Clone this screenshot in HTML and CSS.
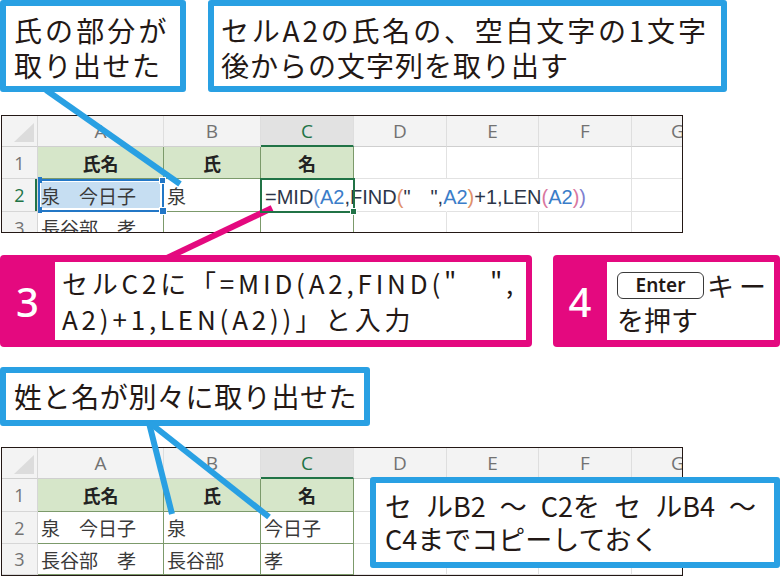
FILE: index.html
```html
<!DOCTYPE html>
<html lang="ja">
<head>
<meta charset="utf-8">
<title>MID関数で名を取り出す</title>
<link rel="stylesheet" href="styles.css">
</head>
<body>
<div class="page">
  <div class="top-row">
    <div class="callout c1"><span class="ln l1">氏の部分が</span><span class="ln l2">取り出せた</span></div>
    <div class="callout c2"><span class="ln l1">セルA2の氏名の、空白文字の1文字</span><span class="ln l2">後からの文字列を取り出す</span></div>
  </div>

  <div class="sheet sheet1">
    <div class="corner"><i></i></div>
    <div class="hd">A</div><div class="hd">B</div><div class="hd on">C</div><div class="hd">D</div><div class="hd">E</div><div class="hd">F</div><div class="hd">G</div>

    <div class="rh">1</div>
    <div class="cell t g">氏名</div><div class="cell t g">氏</div><div class="cell t g">名</div>
    <div class="cell"></div><div class="cell"></div><div class="cell"></div><div class="cell"></div>

    <div class="rh on">2</div>
    <div class="cell t pick">泉　今日子<span class="knob k-tl"></span><span class="knob k-tr"></span><span class="knob k-bl"></span><span class="knob k-br"></span></div>
    <div class="cell t">泉</div>
    <div class="cell t edit"><span class="f">=MID<span class="p1">(</span><span class="r">A2</span>,FIND<span class="p2">(</span>"　",<span class="r">A2</span><span class="p2">)</span>+1,LEN<span class="p3">(</span><span class="r">A2</span><span class="p3">)</span><span class="p4">)</span></span><span class="knob k-g"></span></div>
    <div class="cell bare"></div><div class="cell bare"></div><div class="cell"></div><div class="cell"></div>

    <div class="rh">3</div>
    <div class="cell t">長谷部　孝</div><div class="cell t"></div><div class="cell t"></div>
    <div class="cell"></div><div class="cell"></div><div class="cell"></div><div class="cell"></div>
  </div>

  <div class="steps">
    <div class="step s3">
      <div class="num">3</div>
      <div class="body"><span class="ln">セルC2に「=MID(A2,FIND("　",</span><span class="ln">A2)+1,LEN(A2))」と入力</span></div>
    </div>
    <div class="step s4">
      <div class="num">4</div>
      <div class="body"><span class="ln"><span class="key">Enter</span><span class="kk">キー</span></span><span class="ln">を押す</span></div>
    </div>
  </div>

  <div class="callout c3">姓と名が別々に取り出せた</div>

  <div class="sheet sheet2">
    <div class="corner"><i></i></div>
    <div class="hd">A</div><div class="hd">B</div><div class="hd on">C</div><div class="hd">D</div><div class="hd">E</div><div class="hd">F</div><div class="hd">G</div>

    <div class="rh">1</div>
    <div class="cell t g">氏名</div><div class="cell t g">氏</div><div class="cell t g">名</div>
    <div class="cell"></div><div class="cell"></div><div class="cell"></div><div class="cell"></div>

    <div class="rh">2</div>
    <div class="cell t">泉　今日子</div><div class="cell t">泉</div><div class="cell t">今日子</div>
    <div class="cell"></div><div class="cell"></div><div class="cell"></div><div class="cell"></div>

    <div class="rh">3</div>
    <div class="cell t">長谷部　孝</div><div class="cell t">長谷部</div><div class="cell t">孝</div>
    <div class="cell"></div><div class="cell"></div><div class="cell"></div><div class="cell"></div>
  </div>

  <svg class="leaders" width="783" height="576" viewBox="0 0 783 576" aria-hidden="true">
    <g stroke="#29a0e3" stroke-width="6" fill="none">
      <line x1="46" y1="90" x2="180" y2="184"/>
      <line x1="149" y1="423" x2="172" y2="514"/>
      <line x1="150" y1="423" x2="269" y2="517"/>
    </g>
    <line x1="167" y1="258" x2="272" y2="208" stroke="#e4097f" stroke-width="6"/>
  </svg>

  <div class="callout c4"><span class="ln l1">セ ルB2 ～ C2を セ ルB4 ～</span><span class="ln">C4までコピーしておく</span></div>
</div>
</body>
</html>
```

FILE: styles.css
```css
* { box-sizing: border-box; }
html, body { margin: 0; padding: 0; background: #fff; }
body {
  font-family: "Noto Sans CJK JP", "Noto Sans", sans-serif;
  color: #231815;
}
.page {
  position: relative;
  width: 783px;
  height: 576px;
  overflow: hidden;
}

/* callouts */
.top-row { display: flex; gap: 22px; height: 92px; }
.callout {
  background: #fff;
  border: 6px solid #29a0e3;
  border-radius: 3px;
  font-size: 28px;
  line-height: 35px;
}
.ln { display: block; white-space: nowrap; }
.c1 { width: 186px; padding: 7px 0 0 8px; }
.c1 .l1 { letter-spacing: 3.1px; }
.c1 .l2 { letter-spacing: 1.5px; }
.c2 { width: 519px; padding: 7px 0 0 7px; }
.c2 .l1 { letter-spacing: 2.8px; }
.c2 .l2 { letter-spacing: 1px; }
.c3 {
  width: 370px;
  height: 59px;
  margin-top: 20px;
  padding-left: 8px;
  display: flex;
  align-items: center;
  letter-spacing: 0.6px;
}
.c4 {
  position: absolute;
  left: 370px;
  top: 477px;
  width: 410px;
  height: 91px;
  padding: 6px 0 0 9px;
  font-size: 27px;
  line-height: 33px;
}
.c4 .l1 { word-spacing: 8px; }

/* spreadsheet */
.sheet {
  margin-left: 1px;
  width: 682px;
  border: 1px solid #231815;
  display: grid;
  grid-template-columns: 36px 126px 97px 93px 93px 92px 93px 93px;
  overflow: hidden;
  background: #fff;
}
.sheet1 { margin-top: 23px; height: 118px; grid-template-rows: 31px 32px 33px 32px; }
.sheet2 { margin-top: 21px; height: 129px; grid-template-rows: 31px 33px 32px 31px; }

.corner {
  background: #f3f3f3;
  border-right: 1px solid #d8d8d8;
  border-bottom: 1px solid #cfcfcf;
  display: flex;
  align-items: flex-end;
  justify-content: flex-end;
  padding: 0 3px 4px 0;
}
.corner i {
  display: block;
  width: 20px;
  height: 19px;
  background: #dcdcdc;
  clip-path: polygon(100% 0, 100% 100%, 0 100%);
}
.hd, .rh {
  background: #f3f3f3;
  display: flex;
  align-items: center;
  justify-content: center;
  font-family: "Open Sans", "Liberation Sans", sans-serif;
  color: #727272;
}
.hd {
  border-right: 1px solid #dedede;
  border-bottom: 1px solid #cfcfcf;
  font-size: 19px;
}
.hd.on {
  background: #e2e2e2;
  color: #217346;
  border-bottom: 2px solid #217346;
}
.rh {
  border-right: 1px solid #d6d6d6;
  border-bottom: 1px solid #d6d6d6;
  font-size: 18px;
}
.rh.on { color: #217346; box-shadow: inset -2px 0 0 #217346; }

.cell {
  border-right: 1px solid #e2e2e2;
  border-bottom: 1px solid #e2e2e2;
  display: flex;
  align-items: center;
  padding-left: 3px;
  white-space: nowrap;
  font-size: 19px;
  color: #3a3a3a;
}
.cell.t { border-color: #7c9a6b; }
.cell.g {
  background: #d6e6c9;
  justify-content: center;
  padding-left: 0;
  font-weight: 700;
  font-size: 18px;
  color: #222;
}
.cell.bare { border-right-color: transparent; }

.pick {
  position: relative;
  z-index: 1;
  background: #c6def2;
  outline: 2px solid #2377c6;
  outline-offset: -2px;
  box-shadow: inset 0 0 0 3px #fff;
}
.edit {
  position: relative;
  z-index: 2;
  padding-left: 4px;
  outline: 2px solid #217346;
  outline-offset: -1px;
}
.knob {
  position: absolute;
  background: #2377c6;
  border: 1px solid #fff;
}
.k-tl { left: 0; top: -2px; width: 4px; height: 6px; border: 0; }
.k-bl { left: 0; bottom: -2px; width: 4px; height: 6px; border: 0; }
.k-tr { right: -3px; top: -2px; width: 7px; height: 7px; }
.k-br { right: -4px; bottom: -4px; width: 8px; height: 8px; }
.k-g { right: -4px; bottom: -4px; width: 7px; height: 7px; background: #217346; }

.f {
  font-family: "Liberation Sans", "Noto Sans CJK JP", sans-serif;
  font-size: 20px;
  color: #2c3548;
}
.f .r { color: #3a7dc9; }
.f .p1 { color: #5b8fd0; }
.f .p2 { color: #e0906a; }
.f .p3 { color: #d9779f; }
.f .p4 { color: #7f7fd0; }

/* steps */
.steps { display: flex; gap: 21px; margin-top: 22px; height: 92px; }
.step {
  display: flex;
  background: #e4097f;
  border-radius: 4px;
  padding: 7px 6px 7px 0;
}
.s3 { width: 532px; }
.s4 { width: 227px; }
.num {
  width: 55px;
  flex: none;
  display: flex;
  align-items: center;
  justify-content: center;
  color: #fff;
  font-family: "Noto Sans", sans-serif;
  font-weight: 500;
  font-size: 40px;
}
.s4 .num { width: 54px; }
.body {
  flex: 1;
  background: #fff;
  display: flex;
  flex-direction: column;
  justify-content: center;
}
.s3 .body { padding-left: 7px; font-size: 26px; line-height: 36px; letter-spacing: 3.8px; }
.s4 .body { padding-left: 10px; font-size: 27px; line-height: 34px; }
.key {
  display: inline-flex;
  align-items: center;
  justify-content: center;
  width: 87px;
  height: 27px;
  border: 1.5px solid #3a3a3a;
  border-radius: 6px;
  font-family: "Noto Sans", sans-serif;
  font-weight: 600;
  font-size: 19px;
  line-height: 1;
  vertical-align: middle;
}
.kk { letter-spacing: 5px; margin-left: 3px; vertical-align: middle; }

/* leader lines */
.leaders { position: absolute; left: 0; top: 0; pointer-events: none; }
```
